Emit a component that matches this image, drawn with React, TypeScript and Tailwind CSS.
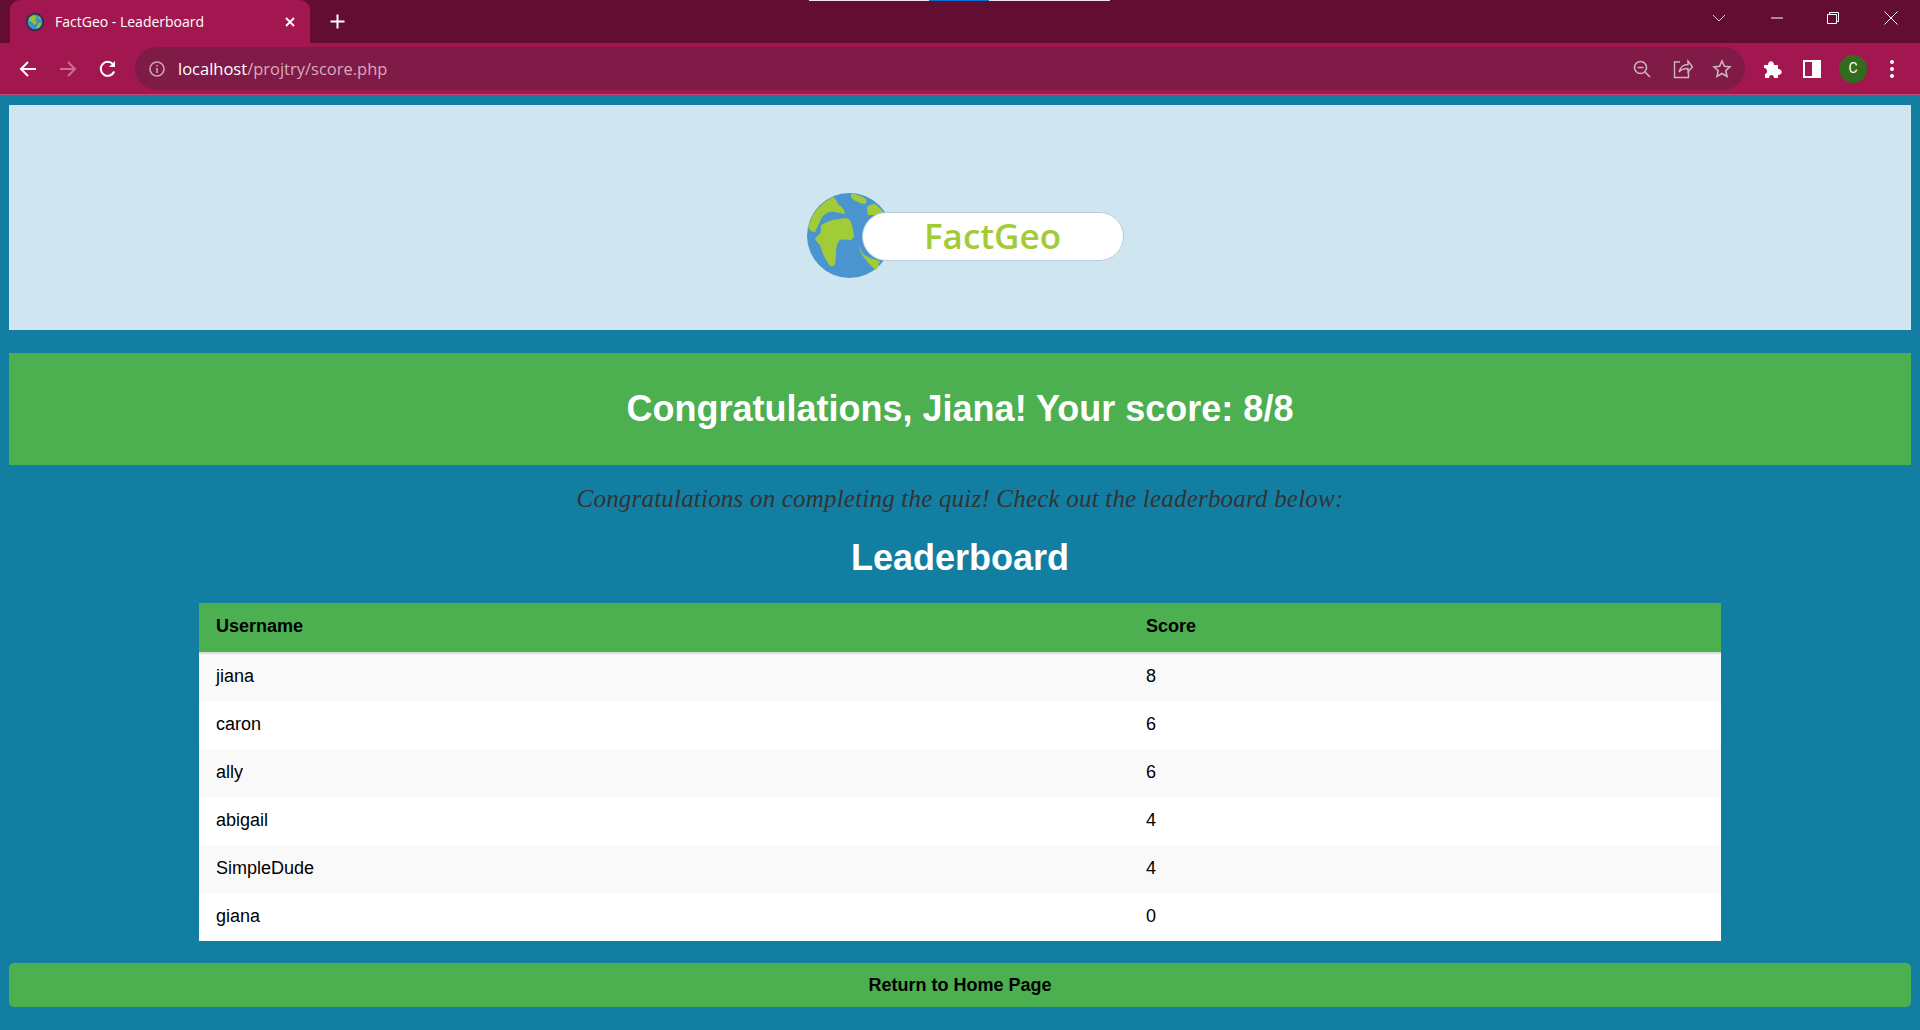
import React from 'react';

const rows = [
  { username: 'jiana', score: 8 },
  { username: 'caron', score: 6 },
  { username: 'ally', score: 6 },
  { username: 'abigail', score: 4 },
  { username: 'SimpleDude', score: 4 },
  { username: 'giana', score: 0 },
];

function Globe({ className }: { className?: string }) {
  return (
    <svg width="85" height="85" viewBox="0 0 85 85" className={className}>
      <circle cx="42.5" cy="42.5" r="42.5" fill="#4a94d0" />
      <path
        d="M1 34 C5 20 14 10 26 4 C29 6 30 9 31 11 C35 14 38 17 38 21 C33 21 28 18 23 19 C18 20 16 23 14 26 C12 30 10 35 8 39 C6 39 4 38 3 37 Z"
        fill="#a2cb38"
      />
      <path d="M44 1 C50 1 55 3 59 6 C60 8 59 10 58 11 C55 11 53 10 51 9 C48 8 45 6 44 4 Z" fill="#a2cb38" />
      <path d="M60 14 C62 12 65 11 68 11 C71 13 74 16 76 19 L75 22 L61 22 C60 19 60 16 60 14 Z" fill="#a2cb38" />
      <path
        d="M14 32 C20 29 26 26 33 26 C37 25 41 25 43 27 C45 32 47 38 47 44 L44 47 C40 47 36 46 33 47 C30 50 30 53 29 57 C29 62 29 67 28 71 C27 73 25 74 23 73 C20 69 18 65 16 61 C15 58 14 55 13 52 C11 50 9 48 8 46 C9 44 11 42 13 41 C14 38 14 35 14 32 Z"
        fill="#a2cb38"
      />
      <path d="M52 52 C53 55 54 58 56 61 C60 64 65 66 73 68 C72 71 71 74 69 77 C65 74 62 71 59 67 C56 64 54 60 53 57 Z" fill="#a2cb38" />
    </svg>
  );
}

function Favicon() {
  return (
    <svg width="18" height="18" viewBox="0 0 18 18">
      <circle cx="9" cy="9" r="8.2" fill="#3f8fcb" stroke="#14303f" strokeWidth="1.4" />
      <path d="M3 5 L8 2 L11 4 L9 7 L11 10 L8 12 L6 9 L3 8 Z" fill="#94c42d" />
      <path d="M12 11 L15.5 9 L14 14 L10 15.5 Z" fill="#94c42d" />
      <path d="M12 3 L15 5 L13 6 Z" fill="#94c42d" />
    </svg>
  );
}

function Tab() {
  return (
    <div className="flex h-[43px] w-[300px] items-center rounded-t-[10px] bg-[#a31750] pl-[16px] pr-[12px] text-white">
      <Favicon />
      <span className="ml-[11px] flex-1 font-['Open_Sans',sans-serif] text-[14px]">FactGeo - Leaderboard</span>
      <svg width="16" height="16" viewBox="0 0 16 16" fill="none" stroke="currentColor" strokeWidth="1.8">
        <path d="M4 4l8 8M12 4l-8 8" />
      </svg>
    </div>
  );
}

function TitleBar() {
  return (
    <div className="relative flex h-[43px] items-start bg-[#640d33] pl-[10px]">
      <div className="absolute left-[809px] top-0 flex h-px w-[301px]">
        <div className="w-[120px] bg-[#e8e8e8]" />
        <div className="w-[60px] bg-[#0a6fd0]" />
        <div className="flex-1 bg-[#e8e8e8]" />
      </div>
      <Tab />
      <svg className="ml-[19px] mt-[13px]" width="17" height="17" viewBox="0 0 17 17" fill="none" stroke="white" strokeWidth="2">
        <path d="M8.5 1.5v14M1.5 8.5h14" />
      </svg>
      <div className="ml-auto flex items-center pt-[11px] text-white">
        <svg width="14" height="14" viewBox="0 0 14 14" fill="none" stroke="#e3c6d2" strokeWidth="1">
          <path d="M1 4l6 6 6-6" />
        </svg>
        <svg className="ml-[44px]" width="14" height="14" viewBox="0 0 14 14" fill="none" stroke="white" strokeWidth="1">
          <path d="M1 7h12" />
        </svg>
        <svg className="ml-[42px]" width="14" height="14" viewBox="0 0 14 14" fill="none" stroke="white" strokeWidth="1">
          <path d="M1.5 3.5h9v9h-9z M3.5 3.5v-2h9v9h-2" />
        </svg>
        <svg className="ml-[44px] mr-[22px]" width="14" height="14" viewBox="0 0 14 14" fill="none" stroke="white" strokeWidth="1">
          <path d="M.5.5l13 13M13.5.5l-13 13" />
        </svg>
      </div>
    </div>
  );
}

function Toolbar() {
  return (
    <div className="flex h-[52px] items-center border-b border-[#c04a75] bg-[#a31750] pl-[18px]">
      <svg width="20" height="20" viewBox="0 0 20 20" fill="none" stroke="white" strokeWidth="2">
        <path d="M18 10H3M10 3l-7 7 7 7" />
      </svg>
      <svg className="ml-[20px]" width="20" height="20" viewBox="0 0 20 20" fill="none" stroke="#cf6d94" strokeWidth="2">
        <path d="M2 10h15M10 3l7 7-7 7" />
      </svg>
      <svg className="ml-[20px]" width="20" height="20" viewBox="0 0 20 20" fill="none" stroke="white" strokeWidth="2">
        <path d="M16.2 12.5A7 7 0 1 1 15 5.2" />
        <path d="M17 2v6h-6z" fill="white" stroke="none" />
      </svg>
      <div className="ml-[17px] flex h-[43px] w-[1610px] items-center rounded-full bg-[#801a47] pl-[13px] pr-[13px]">
        <svg width="18" height="18" viewBox="0 0 18 18" fill="none" stroke="#cfa5b8" strokeWidth="1.6">
          <circle cx="9" cy="9" r="7" />
          <path d="M9 8v5M9 5v1.6" />
        </svg>
        <span className="ml-[12px] flex-1 pt-[1px] font-['Open_Sans',sans-serif] text-[16.5px] text-[#d9a9bf]">
          <span className="text-white">localhost</span>/projtry/score.php
        </span>
        <svg width="18" height="18" viewBox="0 0 18 18" fill="none" stroke="#cfb3c0" strokeWidth="1.6">
          <circle cx="7.5" cy="7.5" r="6" />
          <path d="M4.5 7.5h6M12 12l5 5" />
        </svg>
        <svg className="ml-[22px]" width="20" height="20" viewBox="0 0 20 20" fill="none" stroke="#cfb3c0" strokeWidth="1.4">
          <path d="M7 3H1.5v15.5h14V13M6 13c1-5 5-7.5 9-7.5V2l4.5 6-4.5 5V9.5c-4 0-7 1-9 3.5z" />
        </svg>
        <svg className="ml-[19px]" width="20" height="20" viewBox="0 0 20 20" fill="none" stroke="#cfb3c0" strokeWidth="1.6">
          <path d="M10 2l2.4 5.3 5.6.6-4.2 3.8 1.2 5.7L10 14.5l-5 2.9 1.2-5.7L2 7.9l5.6-.6z" />
        </svg>
      </div>
      <svg className="ml-[18px]" width="20" height="20" viewBox="0 0 20 20" fill="white">
        <path d="M1 9V6h4c0-5 6-5 6 0h4v4c5 0 5 6 0 6v3h-4c0-4-5-4-5 0H2v-4c3 0 3-6-1-6z" />
      </svg>
      <div className="ml-[20px] flex h-[18px] w-[18px] justify-end border-2 border-white bg-transparent">
        <div className="h-full w-[7px] bg-white" />
      </div>
      <div className="ml-[18px] flex h-[28px] w-[28px] items-center justify-center rounded-full bg-[#326b1e] font-['Roboto',sans-serif] text-[14px] text-white">
        C
      </div>
      <div className="ml-[23px] flex flex-col gap-[3px]">
        <div className="h-[4px] w-[4px] rounded-full bg-white" />
        <div className="h-[4px] w-[4px] rounded-full bg-white" />
        <div className="h-[4px] w-[4px] rounded-full bg-white" />
      </div>
    </div>
  );
}

export default function App() {
  return (
    <div className="flex h-[1030px] flex-col overflow-hidden bg-[#127fa2] font-['Liberation_Sans',Arial,sans-serif]">
      <TitleBar />
      <Toolbar />
      <div className="flex flex-col px-[9px] pt-[10px]">
        <header className="flex h-[225px] items-center justify-center bg-[#cfe6f1] pl-[10px] pt-[35px]">
          <div className="relative h-[85px] w-[317px]">
            <Globe className="absolute left-0 top-0" />
            <div className="absolute left-[55px] top-[19px] flex h-[49px] w-[262px] items-center justify-center rounded-full border border-[#b5cddd] bg-white font-['Open_Sans',sans-serif] text-[35px] font-semibold text-[#a2cb38]">
              FactGeo
            </div>
          </div>
        </header>
        <h1 className="mt-[23px] flex h-[112px] items-center justify-center bg-[#4caf50] text-[36px] font-bold text-white">
          Congratulations, Jiana! Your score: 8/8
        </h1>
        <p className="mt-[20px] text-center font-['Liberation_Serif',serif] text-[25px] italic leading-[28px] tracking-[0.2px] text-[#333333]">
          Congratulations on completing the quiz! Check out the leaderboard below:
        </p>
        <h2 className="mt-[24px] text-center text-[36px] font-bold leading-[42px] text-white">Leaderboard</h2>
        <table className="mx-auto mt-[24px] w-[1522px] border-collapse bg-white text-left text-[18px] text-black">
          <thead>
            <tr className="h-[50px] border-b-2 border-[#dddddd] bg-[#4caf50]">
              <th className="w-[946px] pb-[2px] pl-[17px] font-bold">Username</th>
              <th className="pb-[2px] pl-[1px] font-bold">Score</th>
            </tr>
          </thead>
          <tbody>
            {rows.map((row, i) => (
              <tr key={row.username} className={i % 2 === 0 ? 'h-[48px] bg-[#f9f9f9]' : 'h-[48px] bg-white'}>
                <td className="pb-[2px] pl-[17px]">{row.username}</td>
                <td className="pb-[2px] pl-[1px]">{row.score}</td>
              </tr>
            ))}
          </tbody>
        </table>
        <button className="mt-[22px] h-[44px] rounded-[5px] bg-[#4caf50] text-[18px] font-bold text-black">
          Return to Home Page
        </button>
      </div>
    </div>
  );
}
